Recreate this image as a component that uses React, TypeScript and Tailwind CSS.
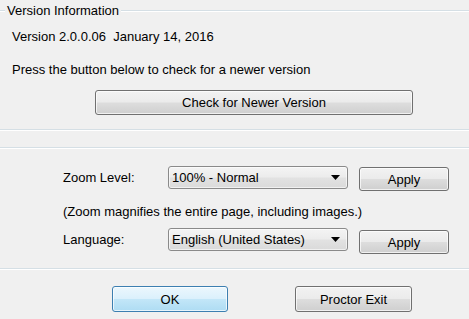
import React from 'react';

const font = { fontFamily: '"Liberation Sans", Arial, sans-serif' };

function Divider({ className = '' }: { className?: string }) {
  return <div className={`h-[2px] border-t border-[#d5dfe5] border-b border-b-white ${className}`} />;
}

function WinButton({ label, className = '', primary = false }: { label: string; className?: string; primary?: boolean }) {
  const face = primary
    ? 'border-[#3c7fb1] bg-[linear-gradient(to_bottom,#ecf7fd_0%,#dbf0fc_48%,#c2e6f8_52%,#aedcf3_100%)]'
    : 'border-[#707070] bg-[linear-gradient(to_bottom,#f2f2f2_0%,#ebebeb_48%,#dddddd_52%,#cfcfcf_100%)]';
  return (
    <button
      type="button"
      className={`border rounded-[3px] text-[13px] text-black leading-none flex items-center justify-center shadow-[inset_0_0_0_1px_rgba(255,255,255,0.7)] ${face} ${className}`}
    >
      {label}
    </button>
  );
}

function WinSelect({ value, className = '' }: { value: string; className?: string }) {
  return (
    <div
      className={`border border-[#8a8a8a] rounded-[3px] flex items-center justify-between pl-[3px] pr-[7px] text-[13px] text-black bg-[linear-gradient(to_bottom,#f4f4f4_0%,#ececec_48%,#e2e2e2_52%,#dadada_100%)] shadow-[inset_0_0_0_1px_rgba(255,255,255,0.6)] ${className}`}
    >
      <span>{value}</span>
      <svg width="9" height="5" viewBox="0 0 9 5">
        <path d="M0 0h9L4.5 5z" fill="#000" />
      </svg>
    </div>
  );
}

export default function App() {
  return (
    <div className="w-[469px] h-[319px] bg-[#f0f0f0] text-black text-[13px] overflow-hidden flex flex-col" style={font}>
      <div className="h-[22px] flex items-center">
        <Divider className="w-[5px]" />
        <span className="px-[2px]">Version Information</span>
        <Divider className="flex-1" />
      </div>

      <div className="mt-[7px] h-[16px] leading-[16px] pl-[12px]">Version 2.0.0.06&nbsp;&nbsp;January 14, 2016</div>
      <div className="mt-[17px] h-[16px] leading-[16px] pl-[12px]">Press the button below to check for a newer version</div>

      <div className="mt-[12px] pl-[95px]">
        <WinButton label="Check for Newer Version" className="w-[318px] h-[25px]" />
      </div>

      <Divider className="mt-[14px]" />
      <Divider className="mt-[16px]" />

      <div className="mt-[17px] h-[25px] flex items-start pl-[63px]">
        <span className="w-[105px] h-[23px] leading-[23px]">Zoom Level:</span>
        <WinSelect value="100% - Normal" className="w-[180px] h-[23px]" />
        <WinButton label="Apply" className="ml-[11px] mt-[1px] w-[90px] h-[24px]" />
      </div>

      <div className="mt-[13px] h-[16px] leading-[16px] pl-[63px]">(Zoom magnifies the entire page, including images.)</div>

      <div className="mt-[8px] h-[26px] flex items-start pl-[63px]">
        <span className="w-[105px] h-[23px] leading-[23px]">Language:</span>
        <WinSelect value="English (United States)" className="w-[180px] h-[23px]" />
        <WinButton label="Apply" className="ml-[11px] mt-[2px] w-[90px] h-[24px]" />
      </div>

      <Divider className="mt-[14px]" />

      <div className="mt-[16px] flex items-start">
        <WinButton label="OK" primary className="ml-[112px] w-[116px] h-[26px]" />
        <WinButton label="Proctor Exit" className="ml-[67px] w-[117px] h-[26px]" />
      </div>
    </div>
  );
}
